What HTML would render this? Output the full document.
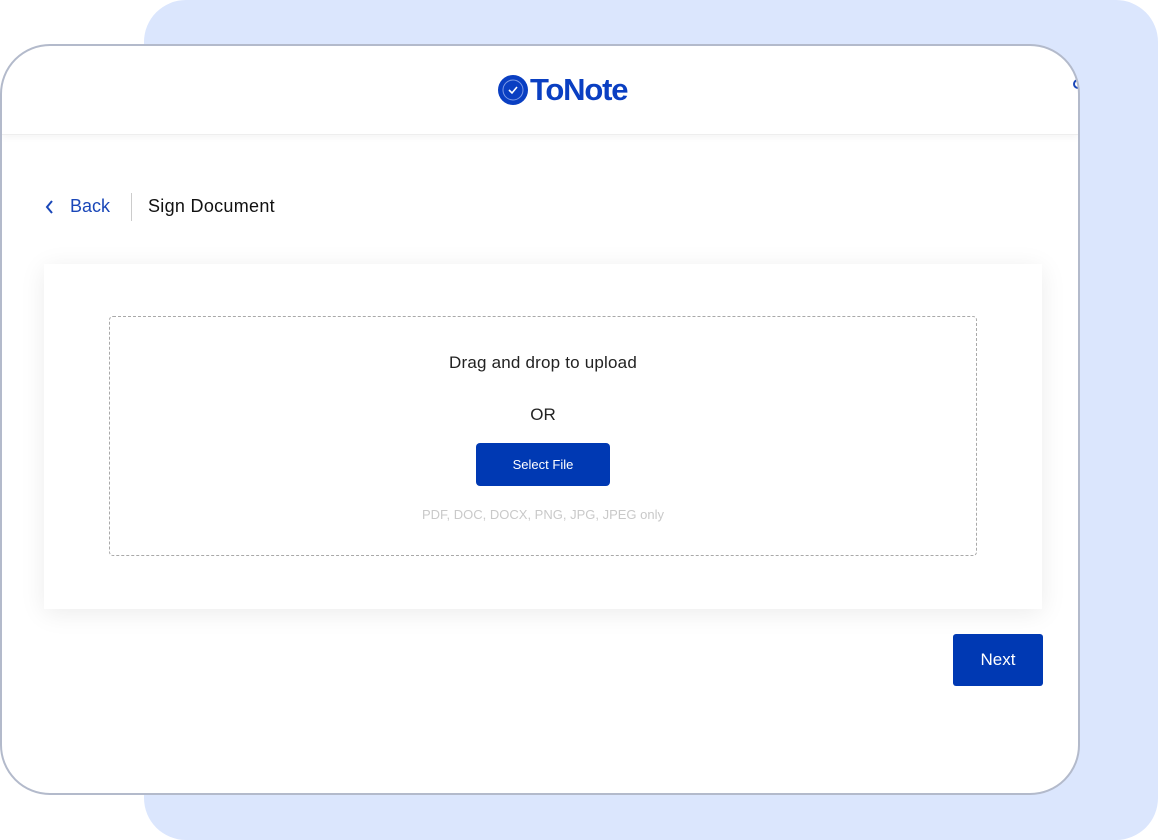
<!DOCTYPE html>
<html><head><meta charset="utf-8"><style>
*{margin:0;padding:0;box-sizing:border-box}
body{width:1158px;height:840px;position:relative;overflow:hidden;background:#fff;font-family:"Liberation Sans",sans-serif}
.bg{position:absolute;left:144px;top:0;width:1014px;height:840px;background:#dbe6fd;border-radius:42px}
.frame{position:absolute;left:0;top:44px;width:1080px;height:751px;background:#fff;border:2px solid #b3bacb;border-radius:50px;overflow:hidden}
.header{position:absolute;left:0;top:0;width:100%;height:89px;border-bottom:1px solid #eee;box-shadow:0 3px 6px rgba(0,0,0,0.04)}
.logo{position:absolute;left:496px;top:26px;display:flex;align-items:center}
.logo span{font-size:31px;font-weight:bold;color:#0a3fc2;letter-spacing:-1.2px;margin-left:2px}
.back{position:absolute;left:42px;top:150px;font-size:18px;color:#1a47b8;display:flex;align-items:center}
.sep{position:absolute;left:129px;top:147px;width:1px;height:28px;background:#ccc}
.title{position:absolute;left:146px;top:150px;font-size:18px;color:#111;letter-spacing:0.3px}
.card{position:absolute;left:42px;top:218px;width:998px;height:345px;background:#fff;box-shadow:0 4px 24px rgba(0,0,0,0.08)}
.drop{position:absolute;left:65px;top:52px;width:868px;height:240px;border:1.5px dashed #a9a9a9;border-radius:4px;text-align:center}
.t1{position:absolute;width:100%;top:36px;font-size:17px;color:#222;letter-spacing:0.2px}
.t2{position:absolute;width:100%;top:88px;font-size:17px;color:#222}
.btn{position:absolute;left:366px;top:126px;width:134px;height:43px;background:#0039b3;border-radius:4px;color:#fff;font-size:13px;line-height:43px}
.t3{position:absolute;width:100%;top:190px;font-size:13px;color:#c9c9c9}
.next{position:absolute;left:951px;top:588px;width:90px;height:52px;background:#0039b3;border-radius:3px;color:#fff;font-size:17px;line-height:52px;text-align:center}
.arc{position:absolute;left:1071px;top:33px;width:10px;height:10px;border:2px solid #1a47b8;border-radius:50%}
</style></head><body>
<div class="bg"></div>
<div class="frame">
 <div class="header">
  <div class="logo">
   <svg width="30" height="30" viewBox="0 0 30 30"><circle cx="15" cy="15" r="15" fill="#0a3fc2"/><circle cx="15" cy="15" r="10" fill="none" stroke="#7c9ae6" stroke-width="1"/><path d="M11 15l3 3 5-6" stroke="#fff" stroke-width="1.6" fill="none"/></svg>
   <span>ToNote</span>
  </div>
  <div class="arc"></div>
 </div>
 <div class="back"><svg width="12" height="16" viewBox="0 0 12 16"><path d="M8 2L3 8l5 6" stroke="#1a47b8" stroke-width="2" fill="none"/></svg><span style="margin-left:14px">Back</span></div>
 <div class="sep"></div>
 <div class="title">Sign Document</div>
 <div class="card">
  <div class="drop">
   <div class="t1">Drag and drop to upload</div>
   <div class="t2">OR</div>
   <div class="btn">Select File</div>
   <div class="t3">PDF, DOC, DOCX, PNG, JPG, JPEG only</div>
  </div>
 </div>
 <div class="next">Next</div>
</div>
</body></html>
